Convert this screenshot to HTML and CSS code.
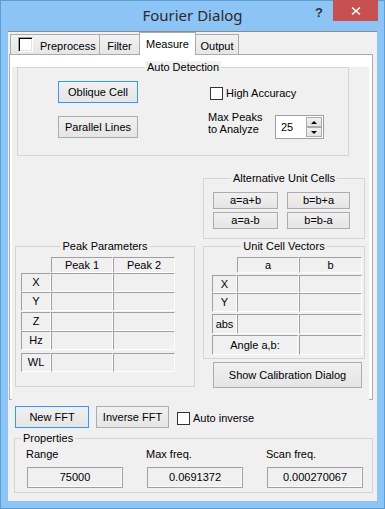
FILE: index.html
```html
<!DOCTYPE html>
<html>
<head>
  <title>Fourier Dialog</title>
  <link rel="stylesheet" href="styles.css">
</head>
<body>
  <div class="window">
    <div class="titlebar">
      <span></span>
      <h1 class="title">Fourier Dialog</h1>
      <div class="caption-buttons">
        <span class="help">?</span>
        <span class="close">
          <svg width="10" height="8" viewBox="0 0 10 8">
            <path d="M1 0.5 L9 7.5 M9 0.5 L1 7.5" stroke="#fff" stroke-width="1.5" fill="none"/>
          </svg>
        </span>
      </div>
    </div>

    <div class="client">
      <div class="tabs">
        <div class="tab tab-check"><span class="check3d"></span><span>Preprocess</span></div>
        <div class="tab tab-filter">Filter</div>
        <div class="tab tab-measure active">Measure</div>
        <div class="tab tab-output">Output</div>
      </div>

      <div class="panel">
        <div class="page">
          <div class="group auto">
            <span class="group-title">Auto Detection</span>
            <div class="auto-left">
              <button class="btn btn-default btn-auto">Oblique Cell</button>
              <button class="btn btn-auto">Parallel Lines</button>
            </div>
            <div class="auto-right">
              <div class="check-row check-accuracy"><span class="checkbox"></span>High Accuracy</div>
              <div class="peaks-row">
                <span class="peaks-label">Max Peaks<br>to Analyze</span>
                <div class="spin">
                  <span class="spin-value">25</span>
                  <span class="spin-btns">
                    <span class="spin-btn"><span class="arrow-up"></span></span>
                    <span class="spin-btn"><span class="arrow-down"></span></span>
                  </span>
                </div>
              </div>
            </div>
          </div>

          <div class="lower">
            <div class="group alt">
              <span class="group-title">Alternative Unit Cells</span>
              <div class="alt-grid">
                <button class="btn btn-small">a=a+b</button>
                <button class="btn btn-small">b=b+a</button>
                <button class="btn btn-small">a=a-b</button>
                <button class="btn btn-small">b=b-a</button>
              </div>
            </div>

            <div class="group peak">
              <span class="group-title">Peak Parameters</span>
              <div class="trow">
                <span class="spacer-peak"></span>
                <span class="cell head peak-col">Peak 1</span>
                <span class="cell head peak-col">Peak 2</span>
              </div>
              <div class="trow">
                <span class="cell peak-label">X</span>
                <span class="cell data peak-col"></span>
                <span class="cell data peak-col"></span>
              </div>
              <div class="trow">
                <span class="cell peak-label">Y</span>
                <span class="cell data peak-col"></span>
                <span class="cell data peak-col"></span>
              </div>
              <div class="trow gap1">
                <span class="cell peak-label">Z</span>
                <span class="cell data peak-col"></span>
                <span class="cell data peak-col"></span>
              </div>
              <div class="trow">
                <span class="cell peak-label">Hz</span>
                <span class="cell data peak-col"></span>
                <span class="cell data peak-col"></span>
              </div>
              <div class="trow gap3">
                <span class="cell peak-label">WL</span>
                <span class="cell data peak-col"></span>
                <span class="cell data peak-col"></span>
              </div>
            </div>

            <div class="right-stack">
              <div class="group ucv">
                <span class="group-title">Unit Cell Vectors</span>
                <div class="trow">
                  <span class="spacer-ucv"></span>
                  <span class="cell head col-a">a</span>
                  <span class="cell head col-b">b</span>
                </div>
                <div class="trow gap2 row18">
                  <span class="cell ucv-label">X</span>
                  <span class="cell data col-a"></span>
                  <span class="cell data col-b"></span>
                </div>
                <div class="trow">
                  <span class="cell ucv-label">Y</span>
                  <span class="cell data col-a"></span>
                  <span class="cell data col-b"></span>
                </div>
                <div class="trow gap2 row20">
                  <span class="cell ucv-label">abs</span>
                  <span class="cell data col-a"></span>
                  <span class="cell data col-b"></span>
                </div>
                <div class="trow gap1 row20">
                  <span class="cell angle-label">Angle a,b:</span>
                  <span class="cell data col-b"></span>
                </div>
              </div>
              <button class="btn btn-calib">Show Calibration Dialog</button>
            </div>
          </div>
        </div>
      </div>

      <div class="actions">
        <button class="btn btn-default btn-fft">New FFT</button>
        <button class="btn btn-inverse">Inverse FFT</button>
        <div class="check-row check-inverse"><span class="checkbox"></span>Auto inverse</div>
      </div>

      <div class="group props">
        <span class="group-title props-title">Properties</span>
        <div class="prop">
          <span class="prop-label">Range</span>
          <span class="prop-value">75000</span>
        </div>
        <div class="prop">
          <span class="prop-label">Max freq.</span>
          <span class="prop-value">0.0691372</span>
        </div>
        <div class="prop">
          <span class="prop-label">Scan freq.</span>
          <span class="prop-value">0.000270067</span>
        </div>
      </div>
    </div>
  </div>
</body>
</html>
```

FILE: styles.css
```css
/* Reset */
* {
  margin: 0;
  padding: 0;
  box-sizing: border-box;
}

body {
  background-color: #8bc4f5;
  font-family: "Liberation Sans", Arial, sans-serif;
  font-size: 11px;
  color: #000;
}

/* Window frame */
.window {
  width: 385px;
  height: 509px;
  border: 1px solid #5d9dd5;
  background-color: #8bc4f5;
  padding: 0 7px 7px;
  display: flex;
  flex-direction: column;
}

.titlebar {
  height: 30px;
  display: grid;
  grid-template-columns: 1fr auto 1fr;
}

.title {
  font-family: "Noto Sans", "Open Sans", sans-serif;
  font-size: 15px;
  font-weight: 400;
  line-height: 20px;
  padding-top: 4px;
  color: #2b2b2b;
  white-space: nowrap;
}

.caption-buttons {
  justify-self: end;
  display: flex;
  align-items: flex-start;
  margin-top: -1px;
  margin-right: -1px;
}

.help {
  font-weight: 700;
  font-size: 13px;
  line-height: 13px;
  color: #333;
  margin: 6px 10px 0 0;
}

.close {
  width: 45px;
  height: 21px;
  background-color: #c75050;
  display: flex;
  align-items: center;
  justify-content: center;
}

.client {
  flex: 1;
  background-color: #f0f0f0;
  border-top: 1px solid #8a8a8a;
}

/* Tabs */
.tabs {
  display: flex;
  align-items: flex-end;
  height: 22px;
  padding-left: 2px;
}

.tab {
  height: 20px;
  border: 1px solid #acacac;
  border-bottom: 0;
  background: linear-gradient(#f2f2f2, #e6e6e6);
  padding-top: 5px;
  line-height: 13px;
  text-align: center;
  margin-left: -1px;
}

.tab-check {
  width: 90px;
  margin-left: 0;
  display: flex;
  align-items: flex-start;
  padding: 2px 0 0 7px;
}

.tab-check span:last-child {
  margin: 3px 0 0 7px;
}

.check3d {
  width: 15px;
  height: 15px;
  background-color: #fff;
  border: 1px solid;
  border-color: #a0a0a0 #fff #fff #a0a0a0;
  box-shadow: inset 1px 1px 0 #000, inset -1px -1px 0 #e3e3e3;
}

.tab-filter { width: 41px; }
.tab-measure { width: 57px; }
.tab-output { width: 44px; }

.tab.active {
  height: 23px;
  background: #fff;
  margin-bottom: -1px;
  position: relative;
  z-index: 1;
}

.panel {
  margin-left: 1px;
  width: 364px;
  height: 346px;
  border: 1px solid #acacac;
  background-color: #fff;
  padding: 2px 3px 2px 2px;
}

.page {
  height: 100%;
  background-color: #f0f0f0;
}

/* Group boxes */
.group {
  position: relative;
  border: 1px solid #d5d5d5;
}

.group-title {
  position: absolute;
  top: -7px;
  left: 50%;
  transform: translateX(-50%);
  padding: 0 2px;
  line-height: 13px;
  white-space: nowrap;
  background-color: #f0f0f0;
}

/* Buttons */
.btn {
  font: inherit;
  color: #000;
  border: 1px solid #acacac;
  background: linear-gradient(#f0f0f0, #e5e5e5);
  white-space: nowrap;
}

.btn-default {
  border-color: #3399ff;
}

.checkbox {
  width: 13px;
  height: 13px;
  border: 1px solid #333;
  background-color: #fff;
  flex-shrink: 0;
}

.check-row {
  display: flex;
  align-items: center;
  gap: 3px;
  line-height: 13px;
  white-space: nowrap;
}

/* Auto Detection */
.auto {
  margin: 10px 0 0 5px;
  width: 332px;
  height: 89px;
  display: flex;
  padding: 13px 0 0 40px;
}

.auto-left {
  width: 150px;
  display: flex;
  flex-direction: column;
  align-items: flex-start;
  gap: 13px;
}

.btn-auto {
  width: 80px;
  height: 22px;
}

.auto-right {
  display: flex;
  flex-direction: column;
}

.check-accuracy {
  margin: 6px 0 0 2px;
}

.peaks-row {
  display: flex;
  align-items: flex-start;
  margin-top: 11px;
}

.peaks-label {
  width: 67px;
  line-height: 12px;
}

.spin {
  display: flex;
  width: 49px;
  height: 24px;
  margin-top: 4px;
  border: 1px solid #a0a0a0;
  background-color: #fff;
  padding: 1px;
}

.spin-value {
  flex: 1;
  padding-left: 4px;
  line-height: 20px;
}

.spin-btns {
  width: 16px;
  display: flex;
  flex-direction: column;
}

.spin-btn {
  height: 10px;
  border: 1px solid #acacac;
  background: linear-gradient(#f0f0f0, #e3e3e3);
  display: flex;
  align-items: center;
  justify-content: center;
}

.arrow-up {
  border-left: 3px solid transparent;
  border-right: 3px solid transparent;
  border-bottom: 3px solid #000;
}

.arrow-down {
  border-left: 3px solid transparent;
  border-right: 3px solid transparent;
  border-top: 3px solid #000;
}

/* Lower grid */
.lower {
  display: grid;
  grid-template-columns: 180px 162px;
  column-gap: 8px;
  row-gap: 7px;
  margin: 22px 0 0 3px;
}

.alt {
  grid-column: 2;
  height: 61px;
  padding: 13px 0 0 9px;
}

.alt-grid {
  display: grid;
  grid-template-columns: 65px 63px;
  column-gap: 9px;
  row-gap: 3px;
}

.btn-small {
  height: 17px;
  line-height: 13px;
}

.peak {
  grid-column: 1;
  grid-row: 2;
  height: 141px;
  padding: 10px 0 0 5px;
}

.right-stack {
  grid-column: 2;
  grid-row: 2;
}

.ucv {
  height: 113px;
  padding: 10px 0 0 8px;
}

/* Static cells */
.trow {
  display: flex;
}

.trow.gap1 { margin-top: 1px; }
.trow.gap2 { margin-top: 2px; }
.trow.gap3 { margin-top: 3px; }

.cell {
  height: 19px;
  border: 1px solid;
  border-color: #a0a0a0 #fff #fff #a0a0a0;
  text-align: center;
  line-height: 17px;
}

.cell.head {
  height: 16px;
  line-height: 14px;
}

.row18 .cell {
  height: 18px;
  line-height: 16px;
}

.row20 .cell {
  height: 20px;
  line-height: 18px;
}

.spacer-peak { width: 30px; }
.peak-label { width: 30px; }
.peak-col { width: 62px; }

.spacer-ucv { width: 25px; }
.ucv-label { width: 25px; }
.col-a { width: 62px; }
.col-b { width: 63px; }

.angle-label {
  width: 86px;
  margin-right: 1px;
}

.btn-calib {
  margin: 3px 0 0 10px;
  width: 149px;
  height: 26px;
}

/* Bottom row */
.actions {
  display: flex;
  align-items: flex-start;
  margin: 6px 0 0 7px;
}

.btn-fft {
  width: 74px;
  height: 22px;
}

.btn-inverse {
  width: 73px;
  height: 22px;
  margin-left: 7px;
}

.check-inverse {
  margin: 6px 0 0 8px;
}

/* Properties */
.props {
  margin: 10px 0 0 6px;
  width: 359px;
  height: 55px;
  padding: 9px 0 0 11px;
  display: grid;
  grid-template-columns: repeat(3, 120px);
}

.props-title {
  left: 6px;
  transform: none;
}

.prop {
  display: flex;
  flex-direction: column;
  align-items: flex-start;
}

.prop-label {
  line-height: 13px;
}

.prop-value {
  margin: 6px 0 0 1px;
  width: 96px;
  height: 21px;
  border: 1px solid #a0a0a0;
  box-shadow: inset -1px -1px 0 #fff;
  text-align: center;
  line-height: 19px;
}
```
